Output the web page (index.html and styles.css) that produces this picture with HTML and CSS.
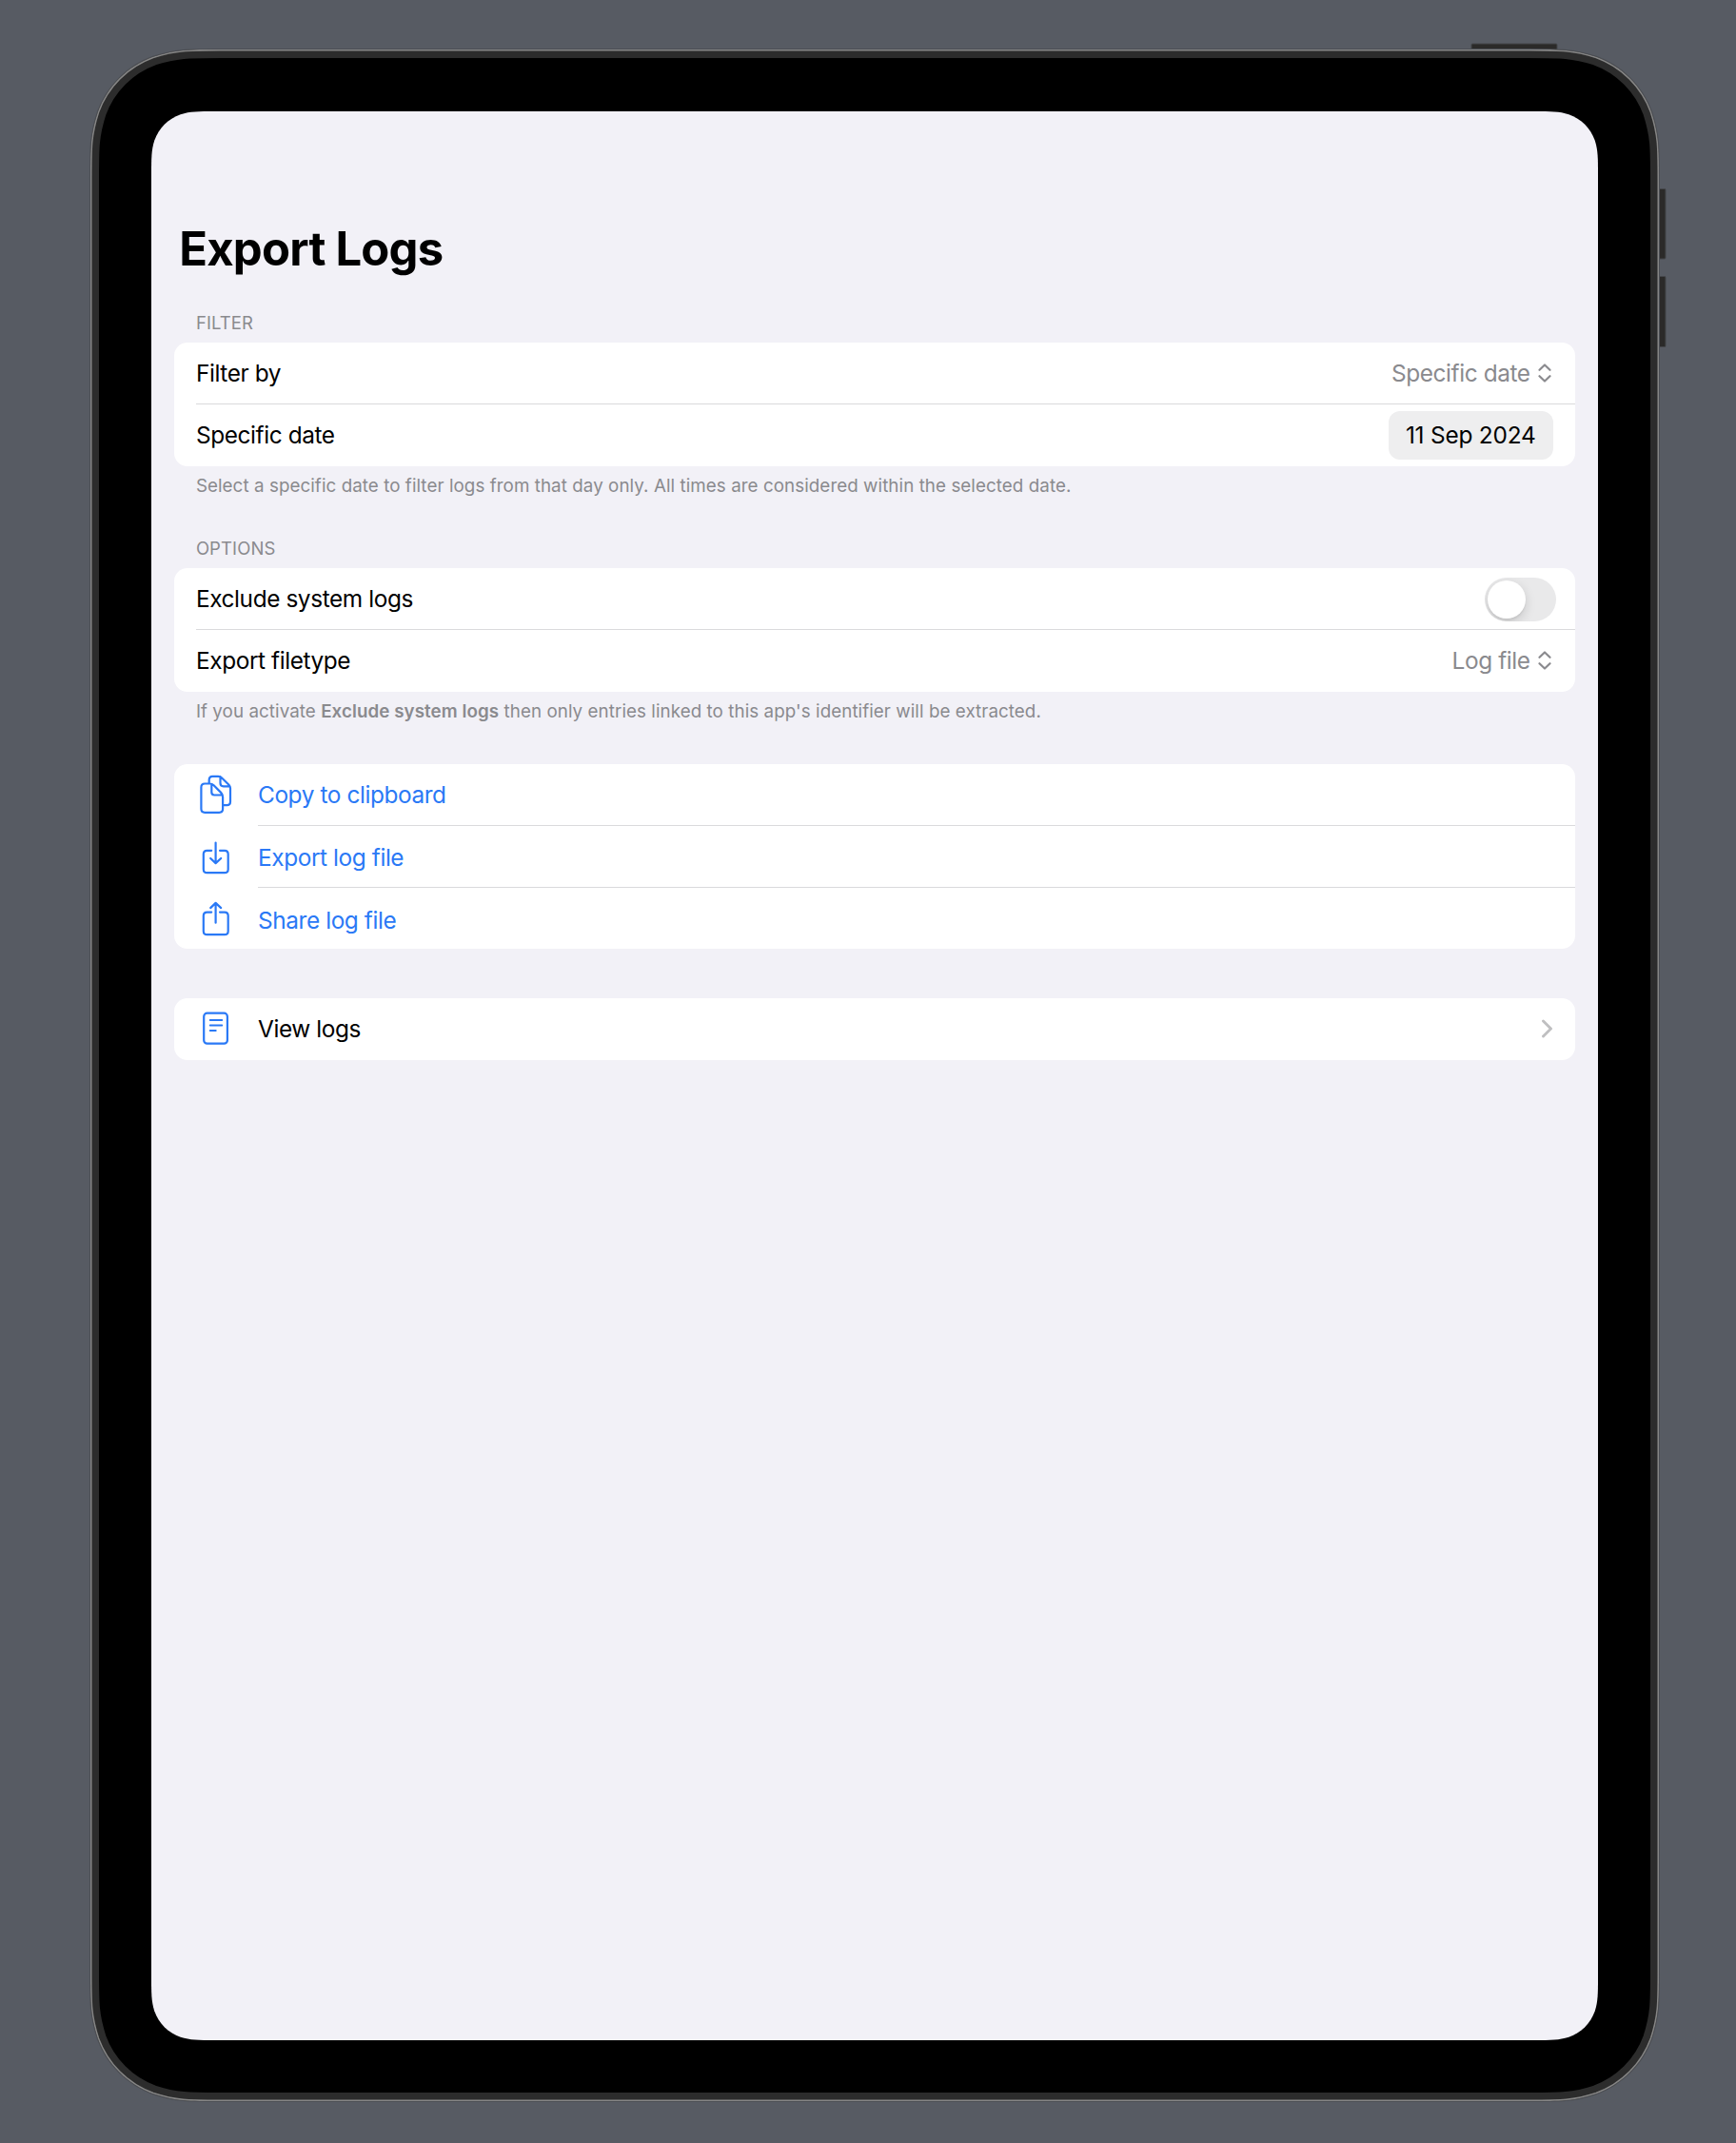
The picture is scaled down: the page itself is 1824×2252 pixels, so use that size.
FILE: index.html
```
<!DOCTYPE html>
<html lang="en">
<head>
<meta charset="utf-8">
<title>Export Logs</title>
<link rel="stylesheet" href="styles.css">
</head>
<body>
<svg class="device" width="1824" height="2252" viewBox="0 0 1824 2252" aria-hidden="true">
  <defs>
    <path id="shell" d="M232 52H1606C1641 52 1653 52 1677.3 59.8C1704.2 69.6 1725.4 90.8 1735.2 117.7C1743 142 1743 154 1743 189V2071C1743 2106 1743 2118 1735.2 2142.3C1725.4 2169.2 1704.2 2190.4 1677.3 2200.2C1653 2208 1641 2208 1606 2208H232C197 2208 185 2208 160.7 2200.2C133.8 2190.4 112.6 2169.2 102.8 2142.3C95 2118 95 2106 95 2071V189C95 154 95 142 102.8 117.7C112.6 90.8 133.8 69.6 160.7 59.8C185 52 197 52 232 52Z"/>
    <clipPath id="shell-clip"><use href="#shell"/></clipPath>
  </defs>
  <g class="button">
    <rect x="1546" y="46" width="90" height="10" rx="1"/>
    <rect x="1738" y="198.500" width="12" height="73.500" rx="1"/>
    <rect x="1738" y="290.500" width="12" height="74" rx="1"/>
  </g>
  <use class="shell-shadow" href="#shell"/>
  <g clip-path="url(#shell-clip)">
    <use class="shell-band" href="#shell"/>
    <use class="shell-edge" href="#shell"/>
  </g>
  <path class="display" d="M226 117H1612C1630 117 1638 117 1648.300 120.200C1661.500 125 1671 134.500 1675.800 147.700C1679 158 1679 166 1679 184V2077C1679 2095 1679 2103 1675.800 2113.300C1671 2126.500 1661.500 2136 1648.300 2140.800C1638 2144 1630 2144 1612 2144H226C208 2144 200 2144 189.700 2140.800C176.500 2136 167 2126.500 162.200 2113.300C159 2103 159 2095 159 2077V184C159 166 159 158 162.200 147.700C167 134.500 176.500 125 189.700 120.200C200 117 208 117 226 117Z"/>
</svg>
<main class="screen">
  <h1 class="title">Export Logs</h1>

  <section class="section">
    <h2 class="section-header">FILTER</h2>
    <div class="card">
      <div class="row">
        <span class="label">Filter by</span>
        <span class="picker"><span>Specific date</span>
          <svg class="updown" width="14" height="20" viewBox="0 0 14 20"><path d="M1.500 6.800L7 1.500L12.500 6.800M1.500 13.200L7 18.500L12.500 13.200"/></svg>
        </span>
      </div>
      <div class="row">
        <span class="label">Specific date</span>
        <span class="date-pill">11 Sep 2024</span>
      </div>
    </div>
    <p class="section-footer">Select a specific date to filter logs from that day only. All times are considered within the selected date.</p>
  </section>

  <section class="section">
    <h2 class="section-header">OPTIONS</h2>
    <div class="card">
      <div class="row">
        <span class="label">Exclude system logs</span>
        <span class="toggle"><span class="knob"></span></span>
      </div>
      <div class="row">
        <span class="label">Export filetype</span>
        <span class="picker"><span>Log file</span>
          <svg class="updown" width="14" height="20" viewBox="0 0 14 20"><path d="M1.500 6.800L7 1.500L12.500 6.800M1.500 13.200L7 18.500L12.500 13.200"/></svg>
        </span>
      </div>
    </div>
    <p class="section-footer">If you activate <b>Exclude system logs</b> then only entries linked to this app's identifier will be extracted.</p>
  </section>

  <div class="card card-actions">
    <div class="row action">
      <svg class="icon" width="40" height="44" viewBox="0 0 40 44"><path d="M11.700 10.200V6.400Q11.700 2.800 15.300 2.800H21.300Q23.300 2.800 24.800 4.300L32.500 11.700Q34 13.200 34 15.300V29.600Q34 33.200 30.400 33.200H27.200M23.500 3.200V10Q23.500 13.300 26.800 13.300H33.500M7.200 10.500H12.300Q14.800 10.500 16.600 12.300L23.900 19.600Q26.100 21.800 26.100 24.400V37Q26.100 40.800 22.300 40.800H7.200Q3.400 40.800 3.400 37V14.300Q3.400 10.500 7.200 10.500ZM14.300 11V19.600Q14.300 22.500 17.100 22.500H25.800"/></svg>
      <span class="label">Copy to clipboard</span>
    </div>
    <div class="row action">
      <svg class="icon" width="40" height="44" viewBox="0 0 40 44"><path d="M14.200 14.800H9.500Q5.800 14.800 5.800 18.500V34.500Q5.800 38.200 9.500 38.200H28Q31.700 38.200 31.700 34.500V18.500Q31.700 14.800 28 14.800H23M18.600 6.500V27.800M13.200 23L18.600 28.100L24.200 23"/></svg>
      <span class="label">Export log file</span>
    </div>
    <div class="row action">
      <svg class="icon" width="40" height="44" viewBox="0 0 40 44"><path d="M14.200 13.600H9.500Q5.800 13.600 5.800 17.300V33.400Q5.800 37.100 9.500 37.100H28Q31.700 37.100 31.700 33.400V17.300Q31.700 13.600 28 13.600H23M18.600 24.700V4.100M13.200 9.100L18.600 3.900L24.200 9.100"/></svg>
      <span class="label">Share log file</span>
    </div>
  </div>

  <div class="card card-view">
    <div class="row action nav">
      <svg class="icon" width="40" height="44" viewBox="0 0 40 44"><rect x="6.200" y="5.700" width="24.700" height="32" rx="3.500"/><path class="thin" d="M12.700 13H25.300M12.700 18.500H25.300M12.700 24H18.800"/></svg>
      <span class="label">View logs</span>
      <svg class="chevron" width="12" height="20" viewBox="0 0 12 20"><path d="M1.500 2L9.500 10L1.500 18"/></svg>
    </div>
  </div>
</main>
</body>
</html>
```
FILE: styles.css
```
* { box-sizing: border-box; }
body {
  margin: 0;
  width: 1824px;
  height: 2252px;
  overflow: hidden;
  background: #575b63;
  color: #000;
  font-family: Inter, "Liberation Sans", sans-serif;
}
h1, h2, p { margin: 0; font-weight: 400; }

/* Device body, drawn behind the screen content */
.device { position: absolute; left: 0; top: 0; z-index: -1; }
.button { fill: #2b2a29; stroke: #45474b; stroke-width: 1; }
.shell-shadow { fill: #000; stroke: #4b4e54; stroke-width: 2; }
.shell-band { fill: #000; stroke: #2c2c2c; stroke-width: 18; }
.shell-edge { fill: none; stroke: #858585; stroke-width: 3; }
.display { fill: #f2f1f7; }

.screen {
  width: 1520px;
  margin-left: 159px;
  padding: 231px 23.700px 0;
}
.title {
  height: 90px;
  padding-left: 5.500px;
  font-size: 49px;
  font-weight: 700;
  letter-spacing: -.77px;
  line-height: 62px;
}
.section-header {
  height: 39px;
  padding-left: 23.200px;
  color: #8a8a8e;
  font-size: 18.500px;
  letter-spacing: .1px;
  line-height: 36px;
}
.section-footer {
  height: 68.500px;
  padding: 8px 23.200px 0;
  color: #8a8a8e;
  font-size: 18.800px;
  letter-spacing: .062px;
  line-height: 26px;
}
.section-footer b { font-weight: 600; }
.card { border-radius: 14px; background: #fff; }
.row {
  display: flex;
  align-items: center;
  justify-content: space-between;
  height: 64px;
  margin-left: 23.300px;
  padding-right: 23.600px;
  font-size: 24.400px;
  letter-spacing: -.41px;
}
.row + .row { height: 65.500px; border-top: 1px solid #dadadc; }
.picker { display: flex; align-items: center; gap: 8.300px; margin-right: 1.800px; color: #8a8a8e; }
.updown { fill: none; stroke: #8a8a8e; stroke-width: 2.200; stroke-linecap: round; stroke-linejoin: round; }
.date-pill {
  display: flex;
  align-items: center;
  justify-content: center;
  width: 173px;
  height: 51px;
  border-radius: 12px;
  background: #eeeeef;
  letter-spacing: -.2px;
}
.toggle {
  width: 75px;
  height: 46px;
  margin: 1px -3.300px 0 0;
  padding: 3px;
  border-radius: 23px;
  background: #e9e9ea;
  overflow: hidden;
}
.knob {
  display: block;
  width: 40px;
  height: 40px;
  border-radius: 50%;
  background: #fff;
  box-shadow: 0 4px 12px rgba(0, 0, 0, .15), 0 2px 2px rgba(0, 0, 0, .06);
}
.action { justify-content: flex-start; margin-left: 88.300px; color: #2a79f6; }
.action .icon { flex: none; margin-left: -63px; margin-right: 23px; fill: none; stroke: #2a79f6; stroke-width: 2.200; stroke-linecap: round; stroke-linejoin: round; }
.icon .thin { stroke-width: 1.800; }
.card-actions { margin-top: 8px; }
.row.action + .action { height: 65px; padding-top: 1.500px; }
.row.action + .action + .action { padding-top: 3px; }
.card-view { margin-top: 52px; padding-bottom: .5px; }
.nav .label { flex: 1; color: #000; }
.chevron { fill: none; stroke: #bfbfc1; stroke-width: 2.900; stroke-linecap: round; stroke-linejoin: round; }
```
